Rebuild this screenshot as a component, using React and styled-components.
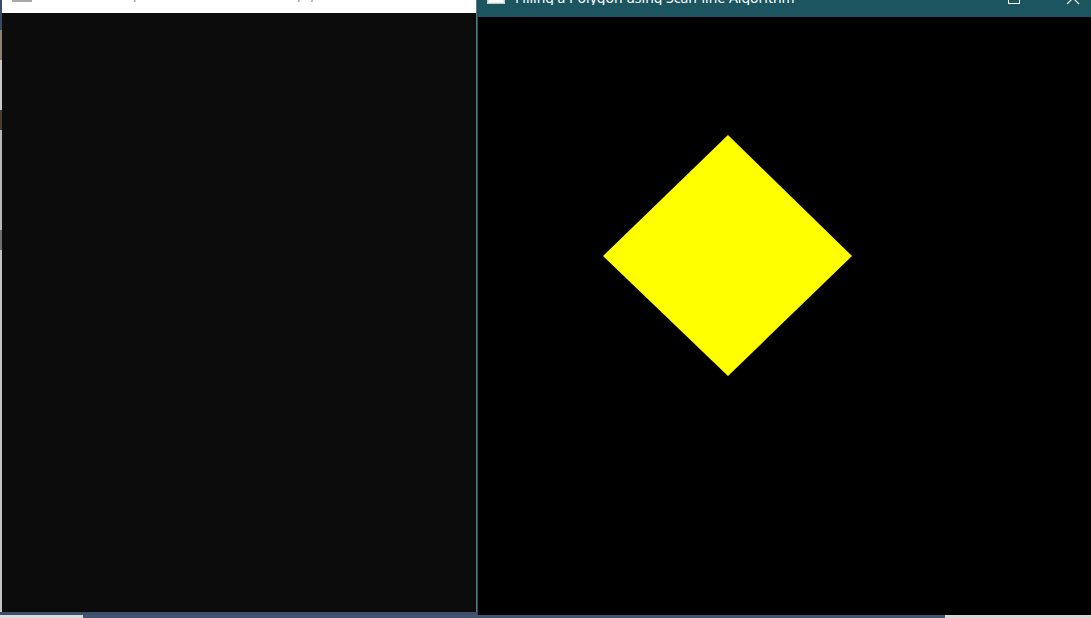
import React from "react";
import styled, { createGlobalStyle } from "styled-components";

const Global = createGlobalStyle`
  html, body { margin: 0; padding: 0; background: #3e4e6c; }
  body { width: 1091px; height: 618px; overflow: hidden; font-family: "Noto Sans", "Open Sans", sans-serif; }
`;

const Desktop = styled.div`
  width: 1091px;
  height: 618px;
  display: flex;
  flex-direction: column;
  overflow: hidden;
  background: #3e4e6c;
`;

const WindowsRow = styled.div`
  display: flex;
  height: 615px;
  flex: none;
`;

const DesktopEdge = styled.div`
  width: 2px;
  flex: none;
  background: linear-gradient(
    to bottom,
    #3b4a68 0 30px,
    #8a8270 30px 60px,
    #c9c9c9 60px 110px,
    #4a3c30 110px 130px,
    #b8b8b8 130px 230px,
    #6f6f6f 230px 250px,
    #c4c4c4 250px 612px,
    #3e4e6c 612px
  );
`;

const ConsoleWindow = styled.div`
  width: 474px;
  height: 612px;
  flex: none;
  display: flex;
  flex-direction: column;
  border-right: 1px solid #5f7582;
  background: #0c0c0c;
`;

const ConsoleTitle = styled.div`
  height: 13px;
  flex: none;
  background: #ffffff;
  display: flex;
  align-items: flex-start;
  gap: 18px;
  padding-left: 10px;
  overflow: hidden;
`;

const MenuGlyph = styled.div`
  width: 20px;
  height: 2px;
  background: #a8a8a8;
  flex: none;
`;

const ClippedText = styled.span`
  font-size: ${(p) => p.$size}px;
  line-height: 1;
  margin-top: ${(p) => p.$shift}px;
  color: ${(p) => p.$color};
  white-space: nowrap;
  overflow: hidden;
  min-width: 0;
  letter-spacing: ${(p) => p.$spacing || 0}px;
`;

const ConsoleBody = styled.div`
  flex: 1;
  background: #0c0c0c;
`;

const GraphicsWindow = styled.div`
  flex: 1;
  display: flex;
  flex-direction: column;
  border-left: 1px solid #1d5560;
  background: #000;
`;

const TitleBar = styled.div`
  height: 17px;
  flex: none;
  background: #1c5560;
  display: flex;
  align-items: flex-start;
  overflow: hidden;
  padding-left: 9px;
`;

const AppIcon = styled.svg`
  flex: none;
  margin-top: -12px;
  margin-right: 10px;
`;

const Spacer = styled.div`
  flex: 1;
`;

const Ctrl = styled.svg`
  flex: none;
  margin-top: ${(p) => p.$shift}px;
`;

const CtrlSlot = styled.div`
  width: ${(p) => p.$w}px;
  display: flex;
  justify-content: center;
  flex: none;
`;

const Canvas = styled.div`
  flex: 1;
  background: #000;
  overflow: hidden;
`;

const Taskbar = styled.div`
  height: 3px;
  flex: none;
  display: flex;
`;

const TaskSeg = styled.div`
  width: ${(p) => p.$w}px;
  flex: ${(p) => (p.$w ? "none" : 1)};
  background: ${(p) => p.$bg};
`;

export default function App() {
  return (
    <>
      <Global />
      <Desktop>
        <WindowsRow>
          <DesktopEdge />
          <ConsoleWindow>
            <ConsoleTitle>
              <MenuGlyph />
              <ClippedText $size={15} $shift={-13} $color="#a0a0a0" $spacing={2}>
                C:\Users\pc\Documents\Polygon\ScanlineFill.exe
              </ClippedText>
            </ConsoleTitle>
            <ConsoleBody />
          </ConsoleWindow>
          <GraphicsWindow>
            <TitleBar>
              <AppIcon width="18" height="16" viewBox="0 0 18 16">
                <rect x="0.5" y="0.5" width="17" height="15" fill="#e8ecec" stroke="#c8d0d0" />
                <rect x="2" y="4" width="14" height="10" fill="#ffffff" />
              </AppIcon>
              <ClippedText $size={14} $shift={-9} $color="#ffffff">
                Filling a Polygon using Scan-line Algorithm
              </ClippedText>
              <Spacer />
              <CtrlSlot $w={82}>
                <Ctrl $shift={-8} width="12" height="12" viewBox="0 0 12 12">
                  <rect x="0.5" y="0.5" width="11" height="11" fill="none" stroke="#ffffff" strokeWidth="1" />
                </Ctrl>
              </CtrlSlot>
              <CtrlSlot $w={36}>
                <Ctrl $shift={-9} width="14" height="14" viewBox="0 0 14 14">
                  <path d="M1 1 L13 13 M13 1 L1 13" stroke="#ffffff" strokeWidth="1.2" fill="none" />
                </Ctrl>
              </CtrlSlot>
            </TitleBar>
            <Canvas>
              <svg width="613" height="598" viewBox="0 0 613 598">
                <polygon points="250,118 374,239 250,359 125,239" fill="#ffff00" />
              </svg>
            </Canvas>
          </GraphicsWindow>
        </WindowsRow>
        <Taskbar>
          <TaskSeg $w={83} $bg="#dcdcdc" />
          <TaskSeg $w={862} $bg="#44546f" />
          <TaskSeg $bg="#d6d8d8" />
        </Taskbar>
      </Desktop>
    </>
  );
}
